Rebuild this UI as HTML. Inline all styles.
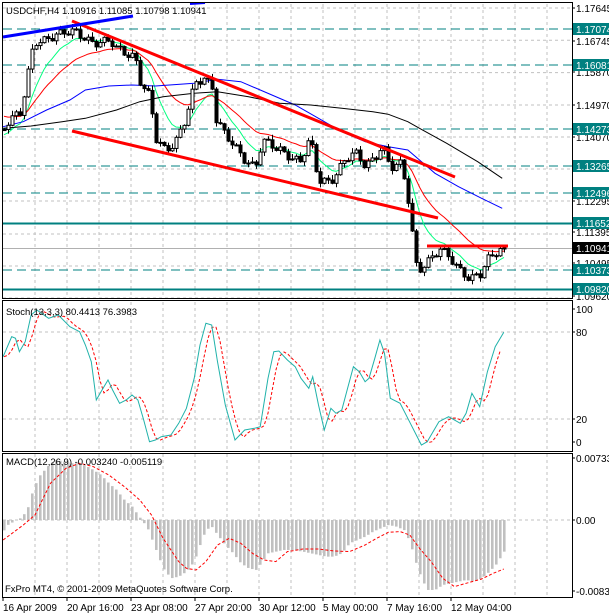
<!DOCTYPE html>
<html><head><meta charset="utf-8"><style>
html,body{margin:0;padding:0;background:#fff;width:609px;height:615px;overflow:hidden}
svg{display:block}
text{font-family:"Liberation Sans",sans-serif;font-size:10px;fill:#000}
</style></head><body>
<svg id="s" width="609" height="615" xmlns="http://www.w3.org/2000/svg">
<rect width="609" height="615" fill="#fff"/>
<g id="grid"></g>
<g id="lv"></g>
<g id="ma"></g>
<g id="cd"></g>
<g id="tl"></g>
<g id="ind"></g>
<g id="fr"></g>
<g id="lab"></g>
</svg>
<script>
var NS="http://www.w3.org/2000/svg";
function el(p,t,a,txt){var e=document.createElementNS(NS,t);for(var k in a)e.setAttribute(k,a[k]);if(txt!==undefined)e.textContent=txt;document.getElementById(p).appendChild(e);return e;}
function L(p,x1,y1,x2,y2,c,w,d){var a={x1:x1,y1:y1,x2:x2,y2:y2,stroke:c,"stroke-width":w||1};if(d)a["stroke-dasharray"]=d;return el(p,"line",a);}
function PL(p,pts,c,w,d){var a={points:pts.map(function(q){return q[0].toFixed(1)+","+q[1].toFixed(1)}).join(" "),fill:"none",stroke:c,"stroke-width":w||1};if(d)a["stroke-dasharray"]=d;return el(p,"polyline",a);}
function Z(arr,oy){return arr.map(function(q){return [q[0]*0.3884,(oy||0)+q[1]*0.3333];});}
var R=572,Lx=3;
var vx=[35,67,99,131,163,195,227,259,291,323,355,387,419,451,483,515,547];
vx.forEach(function(x){L("grid",x,4,x,298,"#c0c0c0",1,"3,3");L("grid",x,302,x,451,"#c0c0c0",1,"3,3");L("grid",x,454,x,597,"#c0c0c0",1,"3,3");});
[8,40.3,72.6,105,137,169,201,234,266,298].forEach(function(y){L("grid",Lx,y,R,y,"#c0c0c0",1,"3,3");});
L("grid",Lx,332,R,332,"#c0c0c0",1,"3,3");L("grid",Lx,419,R,419,"#c0c0c0",1,"3,3");L("grid",Lx,520,R,520,"#c0c0c0",1,"3,3");
[29,65,129,166,193,270].forEach(function(y){L("lv",Lx,y,R,y,"#008080",1,"9,5");});
L("lv",Lx,223.5,R,223.5,"#008080",2);L("lv",Lx,289.5,R,289.5,"#008080",2);
L("lv",Lx,248.5,R,248.5,"#b0b0b0",1);
var kp=[[3,132],[10,115],[20,112],[27,80],[30,60],[35,45],[45,40],[55,32],[70,33],[90,40],[110,42],[115,50],[135,55],[140,80],[150,100],[155,140],[165,150],[175,140],[185,120],[195,85],[205,78],[212,85],[215,115],[225,135],[235,150],[245,160],[255,165],[262,140],[275,150],[290,155],[300,160],[310,140],[318,182],[330,180],[337,170],[345,160],[355,155],[365,165],[375,155],[382,145],[390,170],[400,165],[405,180],[410,210],[415,262],[420,268],[430,262],[440,250],[450,255],[460,270],[470,282],[480,275],[487,258],[495,250],[503,248]];
function interp(x){for(var i=0;i<kp.length-1;i++){if(x<=kp[i+1][0]){var t=(x-kp[i][0])/(kp[i+1][0]-kp[i][0]);return kp[i][1]+t*(kp[i+1][1]-kp[i][1]);}}return kp[kp.length-1][1];}
var n=126,prev=130,closes=[];
for(var i=0;i<n;i++){var x=4+i*4;var c=interp(x)+Math.sin(i*1.7)*4+Math.sin(i*0.63)*2.5;if(x>500)c=248;var o=prev;var hi=Math.min(o,c)-(1+(i*7%5)),lo=Math.max(o,c)+(1+(i*3%6));
L("cd",x+0.5,hi,x+0.5,lo,"#000",1);var t=Math.min(o,c),h=Math.max(1,Math.abs(c-o));
el("cd","rect",{x:x-1,y:t,width:3,height:h,fill:(c<o?"#fff":"#000"),stroke:"#000","stroke-width":1});
closes.push([x,c]);prev=c;}
function ema(p,init){var a=2/(p+1),v=init,r=[];closes.forEach(function(q){v=v+a*(q[1]-v);r.push([q[0],v]);});return r;}
PL("ma",ema(9,136),"#00ff7f",1);
PL("ma",ema(21,115),"#ff0000",1);
PL("ma",Z([[8,380],[60,365],[120,330],[180,300],[220,270],[280,258],[340,255],[400,258],[500,250],[560,238],[620,245],[700,285],[760,315],[820,355],[880,395],[940,425],[1000,440],[1050,450],[1080,480],[1120,520],[1180,560],[1240,595],[1293,625]]),"#0000ff",1);
PL("ma",Z([[8,385],[80,378],[160,365],[220,355],[300,330],[360,305],[420,290],[500,280],[560,275],[640,290],[720,310],[800,315],[880,325],[960,335],[1000,343],[1050,365],[1080,385],[1150,430],[1230,485],[1293,535]]),"#000",1);
L("tl",72,21,455,177,"#ff0000",3);
L("tl",72,131,438,218,"#ff0000",3);
L("tl",427,246,508,246,"#ff0000",3);
L("tl",3,37,133,16,"#0000ff",3);
L("tl",190,4,205,3,"#0000ff",2);
var st=[[8,185],[30,125],[40,130],[50,170],[65,140],[80,60],[95,45],[125,70],[150,60],[180,95],[205,110],[220,150],[235,200],[248,315],[260,290],[278,255],[290,285],[308,325],[325,315],[340,300],[355,315],[370,375],[385,440],[400,435],[415,425],[440,420],[460,385],[480,340],[500,250],[515,150],[530,85],[545,90],[560,200],[580,330],[605,435],[630,405],[655,400],[670,395],[690,250],[705,170],[718,168],[740,195],[760,215],[775,250],[795,280],[805,245],[820,330],[835,405],[852,340],[865,355],[880,345],[895,280],[910,215],[925,230],[940,260],[950,250],[965,190],[978,135],[990,175],[1005,310],[1030,325],[1050,370],[1085,450],[1100,440],[1130,380],[1155,365],[1185,385],[1200,355],[1215,295],[1235,335],[1255,230],[1275,155],[1297,112]];
var sts=Z(st,295);
function si(x){if(x<=sts[0][0])return sts[0][1];for(var i=0;i<sts.length-1;i++){if(x<=sts[i+1][0]){var t=(x-sts[i][0])/(sts[i+1][0]-sts[i][0]);return sts[i][1]+t*(sts[i+1][1]-sts[i][1]);}}return sts[sts.length-1][1];}
var sig=[];for(var x=4;x<=501;x+=4){sig.push([x,(si(x-3)+si(x-6)+si(x-9))/3]);}
PL("ind",sig,"#ff0000",1,"3,2");
PL("ind",sts,"#20b2aa",1);
var mh=Z([[8,710],[20,690],[35,680],[55,668],[70,645],[85,585],[100,545],[115,525],[130,505],[145,495],[165,500],[185,505],[200,505],[220,512],[240,525],[260,540],[280,565],[300,585],[320,615],[340,635],[355,660],[365,675],[380,700],[400,760],[420,820],[440,850],[460,845],[480,830],[500,800],[515,750],[530,705],[545,695],[560,720],[580,750],[600,775],[620,805],[640,820],[660,825],[675,800],[690,775],[710,770],[730,765],[750,765],[780,770],[800,775],[820,780],[840,785],[860,785],[880,775],[900,745],[920,735],[940,725],[960,710],[980,700],[1000,690],[1020,695],[1040,705],[1055,740],[1070,800],[1085,850],[1100,885],[1120,885],[1140,870],[1160,865],[1180,860],[1200,855],[1220,860],[1240,850],[1260,830],[1280,805],[1297,770]],295);
function mi(x){for(var i=0;i<mh.length-1;i++){if(x<=mh[i+1][0]){var t=(x-mh[i][0])/(mh[i+1][0]-mh[i][0]);return mh[i][1]+t*(mh[i+1][1]-mh[i][1]);}}return mh[mh.length-1][1];}
for(var i=0;i<n;i++){var x=4+i*4,y=mi(x),z=520;el("ind","rect",{x:x-1,y:Math.min(y,z),width:2.6,height:Math.max(0.5,Math.abs(y-z)),fill:"#c0c0c0"});}
PL("ind",Z([[8,735],[60,690],[90,660],[130,565],[170,520],[205,505],[240,515],[280,540],[320,575],[360,615],[390,660],[420,730],[460,800],[480,820],[505,825],[530,800],[560,750],[590,730],[620,745],[650,775],[680,795],[710,800],[740,770],[780,762],[820,762],[860,768],[900,770],[940,750],[970,730],[1000,712],[1030,710],[1055,720],[1080,760],[1110,800],[1140,850],[1170,875],[1200,865],[1240,852],[1270,835],[1297,822]],295),"#ff0000",1,"3,2");
[[3,3,298],[3,301,451],[3,454,597]].forEach(function(f){el("fr","rect",{x:f[0]-0.5,y:f[1]-0.5,width:R-f[0]+1,height:f[2]-f[1]+1,fill:"none",stroke:"#000","stroke-width":1});});
[["1.17645",8],["1.16745",41],["1.15870",72],["1.14970",105],["1.14070",137],["1.12295",201],["1.11395",232],["1.10495",263],["1.09620",296]].forEach(function(p){L("lab",R,p[1],R+3,p[1],"#000",1);el("lab","text",{x:576,y:p[1]+4},p[0]);});
[["1.17074",29],["1.16081",65],["1.14273",129],["1.13265",166],["1.12496",193],["1.11652",223],["1.10373",270],["1.09820",289]].forEach(function(p){el("lab","rect",{x:573,y:p[1]-6,width:36,height:12,fill:"#008080"});el("lab","text",{x:576,y:p[1]+4,style:"fill:#fff"},p[0]);});
el("lab","rect",{x:573,y:242,width:36,height:12,fill:"#000"});el("lab","text",{x:576,y:252,style:"fill:#fff"},"1.10941");
[["100",309],["80",332],["20",419],["0",442]].forEach(function(p){L("lab",R,p[1],R+3,p[1],"#000",1);el("lab","text",{x:576,y:p[1]+4},p[0]);});
[["0.007338",458],["0.00",520],["-0.008338",591]].forEach(function(p){L("lab",R,p[1],R+3,p[1],"#000",1);el("lab","text",{x:576,y:p[1]+4},p[0]);});
el("lab","text",{x:6,y:14,style:"font-size:9.5px"},"USDCHF,H4  1.10916 1.11085 1.10798 1.10941");
el("lab","text",{x:6,y:315,style:"font-size:9.5px"},"Stoch(13,3,3) 80.4413 76.3983");
el("lab","text",{x:6,y:465,style:"font-size:9.5px"},"MACD(12,26,9) -0.003240 -0.005119");
el("lab","text",{x:5,y:592,style:"font-size:9.5px"},"FxPro MT4, \u00a9 2001-2009 MetaQuotes Software Corp.");
[["16 Apr 2009",3],["20 Apr 16:00",67],["23 Apr 08:00",131],["27 Apr 20:00",195],["30 Apr 12:00",259],["5 May 00:00",323],["7 May 16:00",387],["12 May 04:00",451]].forEach(function(p){L("lab",p[1],597,p[1],601,"#000",1);el("lab","text",{x:p[1],y:611},p[0]);});
</script>
</body></html>
